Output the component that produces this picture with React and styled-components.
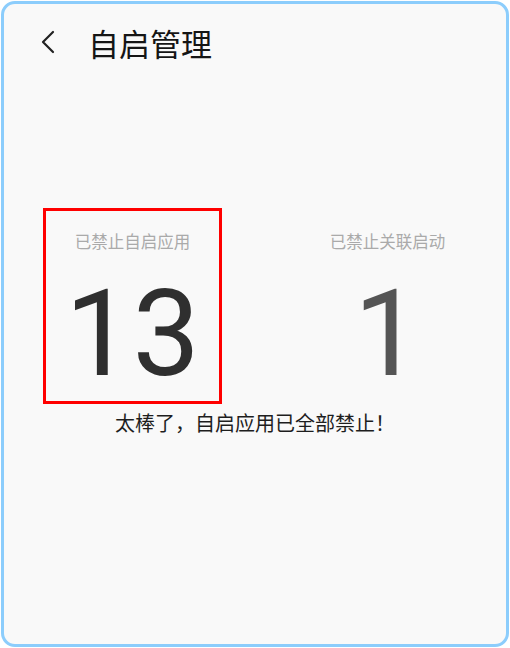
import React from "react";
import styled, { createGlobalStyle } from "styled-components";

const GlobalStyle = createGlobalStyle`
	html, body {
		margin: 0;
		padding: 0;
		background: #ffffff;
	}
	* {
		box-sizing: border-box;
	}
`;

const stats = [
	{ label: "已禁止自启应用", value: 13, highlighted: true, tone: "#2f2f2f" },
	{ label: "已禁止关联启动", value: 1, highlighted: false, tone: "#555555" },
];

const App = () => {
	return (
		<>
			<GlobalStyle />
			<Frame>
				<Header>
					<BackButton aria-label="返回">
						<svg width="16" height="24" viewBox="0 0 16 24" fill="none">
							<polyline
								points="13,2 3,12 13,22"
								stroke="#222"
								strokeWidth="2.2"
								strokeLinecap="round"
								strokeLinejoin="round"
							/>
						</svg>
					</BackButton>
					<Title>自启管理</Title>
				</Header>
				<StatsRow>
					{stats.map((stat) => (
						<Stat key={stat.label} highlighted={stat.highlighted}>
							<StatLabel>{stat.label}</StatLabel>
							<StatValue tone={stat.tone}>{stat.value}</StatValue>
						</Stat>
					))}
				</StatsRow>
				<Message>太棒了，自启应用已全部禁止！</Message>
			</Frame>
		</>
	);
};

export default App;

const Frame = styled.div`
	width: 508px;
	height: 646px;
	margin: 1px;
	border: 3px solid #8ccdfc;
	border-radius: 14px;
	background-color: #f9f9f9;
	display: flex;
	flex-direction: column;
	font-family: "Noto Sans CJK SC", "Noto Sans", sans-serif;
`;

const Header = styled.div`
	height: 76px;
	display: flex;
	align-items: center;
	padding-left: 36px;
`;

const BackButton = styled.button`
	width: 16px;
	height: 24px;
	padding: 0;
	border: none;
	background: none;
	display: flex;
	align-items: center;
	justify-content: center;
`;

const Title = styled.h1`
	margin: 0 0 0 32px;
	font-size: 31px;
	font-weight: 400;
	color: #151515;
`;

const StatsRow = styled.div`
	display: flex;
	padding: 128px 0 0 39px;
	gap: 76px;
`;

const Stat = styled.div`
	width: 179px;
	height: 196px;
	border: 3px solid ${(p) => (p.highlighted ? "#ff0000" : "transparent")};
	display: flex;
	flex-direction: column;
	align-items: center;
	padding-top: 20px;
`;

const StatLabel = styled.span`
	font-size: 16.5px;
	line-height: 20px;
	color: #aaaaaa;
`;

const StatValue = styled.span`
	margin-top: 23px;
	font-family: Roboto, "Liberation Sans", sans-serif;
	font-size: 120px;
	font-weight: 400;
	line-height: 1;
	color: ${(p) => p.tone};
`;

const Message = styled.p`
	margin: 6px 0 0;
	text-align: center;
	font-size: 20px;
	line-height: 26px;
	color: #1e1e1e;
`;
